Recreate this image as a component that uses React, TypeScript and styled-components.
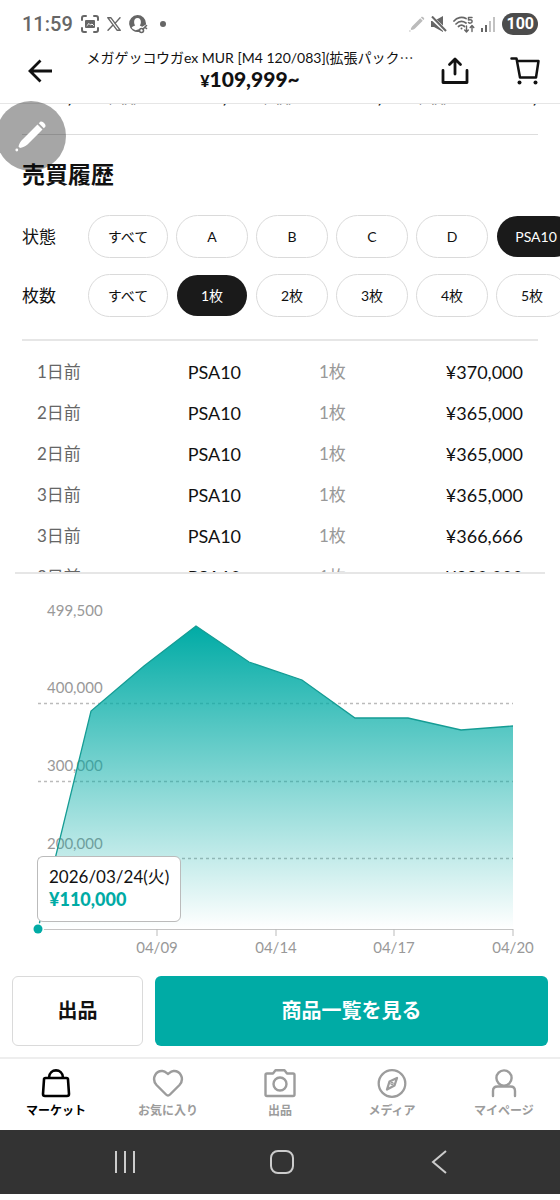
import React from "react";
import styled, { createGlobalStyle } from "styled-components";

const TEAL = "#00aba5";
const TEXT_FONT = `Lato, "Noto Sans CJK JP", sans-serif`;

const GlobalStyle = createGlobalStyle`
  *, *::before, *::after { box-sizing: border-box; }
  body { margin: 0; background: #fff; color: #111; font-family: ${TEXT_FONT}; }
  button { font-family: inherit; cursor: pointer; }
`;

const Screen = styled.div`
  position: relative;
  display: flex;
  flex-direction: column;
  width: 100%;
  min-height: 100vh;
  overflow: hidden;
`;

const StatusBar = styled.div`
  display: flex;
  align-items: center;
  justify-content: space-between;
  height: 48px;
  padding: 0 22px;
  color: #666;
`;

const StatusGroup = styled.div<{ $gap: number }>`
  display: flex;
  align-items: center;
  gap: ${(p) => p.$gap}px;
`;

const Clock = styled.time`
  font: 500 20px/24px Roboto, sans-serif;
`;

const Battery = styled.span`
  padding: 0 4px;
  border-radius: 11px;
  background: #4c4c4c;
  color: #fff;
  font: 700 16px/22px Roboto, sans-serif;
`;

const Header = styled.header`
  display: grid;
  grid-template-columns: 60px 1fr 140px;
  height: 56px;
  padding-left: 20px;
  border-bottom: 1px solid #e6e6e6;
`;

const IconButton = styled.button`
  display: flex;
  padding: 0;
  border: 0;
  background: none;
  color: #111;
`;

const HeaderSide = styled.div<{ $end?: boolean }>`
  display: flex;
  align-items: center;
  justify-content: ${(p) => (p.$end ? "flex-end" : "flex-start")};
  gap: 41px;
  padding: 0 ${(p) => (p.$end ? 20 : 8)}px 10px;
`;

const HeaderTitle = styled.div`
  text-align: center;
  white-space: nowrap;
`;

const ProductName = styled.h1`
  margin: 0;
  font-size: 14px;
  line-height: 18px;
  font-weight: 400;
`;

const Dots = styled.span`
  font-family: "Noto Sans CJK JP", sans-serif;
`;

const ProductPrice = styled.p`
  margin: 0;
  font-size: 21px;
  line-height: 24px;
  font-weight: 900;
`;

const Yen = styled.span`
  font-size: 16px;
`;

const PriceStrip = styled.div`
  display: flex;
  align-items: flex-end;
  height: 3px;
  padding-left: 26px;
  overflow: hidden;
`;

const StripItem = styled.div`
  flex: 0 0 155px;
  font-size: 18px;
  line-height: 18px;
  font-weight: 900;
  white-space: nowrap;
`;

const StripCount = styled.span`
  color: #777;
  font-size: 14px;
  font-weight: 400;
`;

const Section = styled.section`
  margin: 27px 22px 0;
  border-top: 1px solid #ddd;
`;

const SectionTitle = styled.h2`
  margin: 23px 0 24px;
  font-size: 23px;
  line-height: 33px;
  font-weight: 700;
`;

const FilterRow = styled.div`
  display: grid;
  grid-template-columns: 58px 1fr;
  align-items: center;
  gap: 8px;
  height: 43px;
  margin: 0 -22px 16px 0;
`;

const FilterLabel = styled.span`
  font-size: 17px;
  line-height: 24px;
`;

const Chips = styled.div`
  display: flex;
  gap: 8px;
  overflow: hidden;
`;

const Chip = styled.button<{ $wide?: boolean; $selected?: boolean }>`
  flex: 0 0 ${(p) => (p.$wide ? 80 : 72)}px;
  height: 43px;
  padding: 0;
  border: 1px solid ${(p) => (p.$selected ? "transparent" : "#dadada")};
  border-radius: 22px;
  background: ${(p) => (p.$selected ? "#1a1a1a" : "#fff")} padding-box;
  color: ${(p) => (p.$selected ? "#fff" : "#111")};
  font-size: 14px;
  line-height: 20px;
  font-weight: 400;
`;

const HistoryFrame = styled.div`
  height: 223px;
  margin: 0 15px;
  padding: 0 22px;
  overflow: hidden;
  border-bottom: 2px solid #e6e6e6;
`;

const Divider = styled.hr`
  height: 2px;
  margin: 22px 0 10px;
  border: 0;
  background: #e6e6e6;
`;

const HistoryTable = styled.table`
  width: 100%;
  border-collapse: collapse;
  table-layout: fixed;
  font-size: 18px;
`;

const Cell = styled.td<{ $width?: string; $tone?: string; $right?: boolean }>`
  width: ${(p) => p.$width ?? "auto"};
  height: 41px;
  padding: 0;
  color: ${(p) => p.$tone ?? "#111"};
  text-align: ${(p) => (p.$right ? "right" : "left")};
  line-height: 24px;
  white-space: nowrap;
`;

const CellSmall = styled.span`
  font-size: 17px;
`;

const ChartBox = styled.div`
  position: relative;
`;

const ChartSvg = styled.svg`
  display: block;
  width: 100%;
  height: auto;
  font-family: ${TEXT_FONT};
  font-size: 15px;
`;

const Tooltip = styled.div`
  position: absolute;
  left: 37px;
  bottom: 48px;
  padding: 9px 11px 11px;
  border: 1px solid #bbb;
  border-radius: 6px;
  background: #fff;
  font-size: 17px;
  line-height: 22px;
  white-space: nowrap;
`;

const TooltipPrice = styled.div`
  color: ${TEAL};
  font-size: 18px;
  font-weight: 900;
`;

const Actions = styled.div`
  display: grid;
  grid-template-columns: 1fr 3fr;
  gap: 12px;
  padding: 6px 12px 11px;
`;

const ActionButton = styled.button<{ $primary?: boolean }>`
  height: 70px;
  padding: 0 0 3px;
  border: ${(p) => (p.$primary ? "0" : "1px solid #dadada")};
  border-radius: 6px;
  background: ${(p) => (p.$primary ? TEAL : "#fff")};
  color: ${(p) => (p.$primary ? "#fff" : "#111")};
  font-size: 20px;
  font-weight: 700;
`;

const TabBar = styled.nav`
  display: grid;
  grid-template-columns: repeat(5, 1fr);
  height: 73px;
  border-top: 2px solid #eee;
`;

const Tab = styled.a<{ $active?: boolean }>`
  display: flex;
  flex-direction: column;
  align-items: center;
  gap: 3px;
  padding-top: 8px;
  color: ${(p) => (p.$active ? "#000" : "#9c9c9c")};
  font-size: 12px;
  line-height: 18px;
  font-weight: 700;
  text-decoration: none;
`;

const SystemBar = styled.div`
  display: grid;
  grid-template-columns: repeat(3, 1fr);
  align-items: center;
  justify-items: center;
  height: 64px;
  padding: 0 43px 0 47px;
  background: #333;
`;

const FloatingPen = styled.button`
  position: absolute;
  top: 101px;
  left: -4px;
  display: flex;
  align-items: center;
  justify-content: center;
  width: 70px;
  height: 70px;
  padding: 0;
  border: 0;
  border-radius: 50%;
  background: rgba(0, 0, 0, 0.35);
`;

const history = [
  ["1日前", "¥370,000"],
  ["2日前", "¥365,000"],
  ["2日前", "¥365,000"],
  ["3日前", "¥365,000"],
  ["3日前", "¥366,666"],
  ["3日前", "¥380,000"],
];

const stripPrices = ["¥110,000", "¥120,000", "¥130,000", "¥140,000"];
const conditions = ["すべて", "A", "B", "C", "D", "PSA10"];
const counts = ["すべて", "1枚", "2枚", "3枚", "4枚", "5枚"];

const series = [
  [38, 355], [91, 137], [144, 92], [196, 52], [249, 88],
  [302, 106], [355, 144], [408, 144], [461, 156], [513, 152],
];
const line = series.map(([x, y]) => `${x},${y}`).join(" ");
const yLabels = [
  { text: "499,500", y: 42 },
  { text: "400,000", y: 119, grid: 129 },
  { text: "300,000", y: 197, grid: 207 },
  { text: "200,000", y: 275, grid: 284 },
];
const xLabels = [
  { text: "04/09", x: 157 },
  { text: "04/14", x: 276 },
  { text: "04/17", x: 394 },
  { text: "04/20", x: 513 },
];

const stroke = (width: number) => ({
  fill: "none",
  stroke: "currentColor",
  strokeWidth: width,
  strokeLinecap: "round" as const,
  strokeLinejoin: "round" as const,
});

const CaptureIcon = () => (
  <svg width="18" height="18" viewBox="0 0 18 18" {...stroke(2)}>
    <path d="M1 5V3q0-2 2-2h2M13 1h2q2 0 2 2v2M17 13v2q0 2-2 2h-2M5 17H3q-2 0-2-2v-2" />
    <rect x="4" y="5" width="10" height="8" rx="1" fill="currentColor" stroke="none" />
    <path d="M6 10.500l2-2 1.500 1.500 1.500-1 1.500 1.500" stroke="#fff" strokeWidth="1" />
  </svg>
);

const XIcon = () => (
  <svg width="14" height="14" viewBox="0 0 14 14" {...stroke(1)}>
    <path d="M.7.700h3.100l9.500 12.600h-3.100zM13 .700L8 6.400M6 8L1 13.300" strokeWidth="1.400" />
  </svg>
);

const AccountIcon = () => (
  <svg width="19" height="19" viewBox="0 0 19 19">
    <path d="M8.500 0a8.500 8.500 0 1 0 2 16.800l-.6-2.600-3.400 1C4.500 14.500 3 13.500 2.700 12.500c1-1.200 2.500-1.500 3.500-2C4.500 8.500 4.500 3 8.500 3s4 5.500 2.300 7.500l2.400 1.300L17 9.500V8.500A8.500 8.500 0 0 0 8.500 0z" fill="currentColor" />
    <g {...stroke(1.6)}>
      <circle cx="12.500" cy="15.500" r="2" />
      <path d="M14 14l3.500-3.500M16 12l1.500 1.500" />
    </g>
  </svg>
);

const MuteIcon = () => (
  <svg width="16" height="16" viewBox="0 0 16 16">
    <path d="M0 5h3l9-5v16l-9-5H0z" fill="currentColor" />
    <path d="M0 1l15 14" stroke="#fff" strokeWidth="4" />
    <path d="M1 .500l14 14.500" stroke="currentColor" strokeWidth="2" />
  </svg>
);

const WifiIcon = () => (
  <svg width="22" height="17" viewBox="0 0 22 17" {...stroke(1.7)}>
    <path d="M1 5C4 1.500 9 .500 13 2.500M3 8c3-3 7-3 10-1M5.500 10.500c2-1.800 4-1.800 6 0" />
    <circle cx="8.500" cy="12.500" r="1" fill="currentColor" stroke="none" />
    <path d="M19 1.500h-3.500V4c3-.8 4 .5 3.500 2-.4 1.300-2.500 1.500-3.500.5" strokeWidth="1.500" />
    <path d="M13.500 10v5.500M11.700 14l1.800 2 1.800-2M19 15.500V10M17.200 11.500l1.800-2 1.800 2" strokeWidth="1.400" />
  </svg>
);

const SignalIcon = () => (
  <svg width="15" height="15" viewBox="0 0 15 15" fill="currentColor">
    <rect y="11" width="2" height="4" />
    <rect x="4" y="8" width="2" height="7" />
    <rect x="8" y="4" width="2" height="11" opacity="0.4" />
    <rect x="12" width="2" height="15" opacity="0.4" />
  </svg>
);

const PencilIcon = ({ size, color }: { size: number; color: string }) => (
  <svg width={size} height={size} viewBox="0 0 32 32" fill={color}>
    <path d="M22.500 4.500l5 5L12.500 24.500c-2 2-5 3-7.500 3.500l-1.500-1.500C4 24 5.500 21.500 7.500 19.500zM23.800 3.200l1.500-1.500c1.800-1.500 6.500 3 5 5l-1.500 1.500z" />
    <circle cx="1.800" cy="30" r="1.400" />
  </svg>
);

const BackIcon = () => (
  <svg width="24" height="24" viewBox="0 0 24 24" fill="none" stroke="currentColor" strokeWidth="2.800">
    <path d="M12.500 1.500L2 12l10.500 10.500M2 12h22" />
  </svg>
);

const ShareIcon = () => (
  <svg width="28" height="28" viewBox="0 0 28 28" {...stroke(2.800)}>
    <path d="M2 13.500V25.500h24V13.500M14 17V2.500M8.500 7.500L14 2l5.500 5.500" />
  </svg>
);

const CartIcon = () => (
  <svg width="30" height="29" viewBox="0 0 30 29" {...stroke(2.500)}>
    <path d="M1.500 2.500h5L10 21.500h16L28.500 5H7" />
    <circle cx="9.500" cy="26.500" r="2" fill="currentColor" stroke="none" />
    <circle cx="25.500" cy="26.500" r="2" fill="currentColor" stroke="none" />
  </svg>
);

const MarketIcon = () => (
  <svg width="32" height="32" viewBox="0 0 32 32" {...stroke(2.600)}>
    <path d="M5.500 11h21q1.500 0 1.500 1.500l1 14.500q0 2-2 2H5q-2 0-2-2l1-14.500Q4 11 5.500 11zM9 10.500C9.500 1 22.500 1 23 10.500" />
  </svg>
);

const HeartIcon = () => (
  <svg width="32" height="32" viewBox="0 0 32 32" {...stroke(2.400)}>
    <path d="M16 28.500q-1 0-2-1L4.500 18C-1 11.500 4 3.500 10.500 4c3 .2 4 2 5.500 3 1.500-1 2.500-2.800 5.500-3C28 3.500 33 11.500 27.500 18L18 27.500q-1 1-2 1z" />
  </svg>
);

const CameraIcon = () => (
  <svg width="32" height="32" viewBox="0 0 32 32" {...stroke(2.400)}>
    <path d="M3 6.500h6l2.500-3.300h9L23 6.500h6q1.500 0 1.500 1.500v19.500Q30.500 29 29 29H3q-1.500 0-1.500-1.500V8Q1.500 6.500 3 6.500z" />
    <circle cx="16" cy="17" r="6.500" />
  </svg>
);

const CompassIcon = () => (
  <svg width="32" height="32" viewBox="0 0 32 32" {...stroke(2.300)}>
    <circle cx="16" cy="16.500" r="13.300" />
    <path d="M21 11l-2.500 7.500-7.500 4 2.500-8z" />
    <circle cx="16" cy="16.500" r="0.600" />
  </svg>
);

const PersonIcon = () => (
  <svg width="32" height="32" viewBox="0 0 32 32" {...stroke(2.400)}>
    <circle cx="16" cy="11" r="7.600" />
    <path d="M5 29v-5q0-4.500 4.500-4.500h13q4.500 0 4.500 4.500v5" />
  </svg>
);

const tabs = [
  { label: "マーケット", Icon: MarketIcon },
  { label: "お気に入り", Icon: HeartIcon },
  { label: "出品", Icon: CameraIcon },
  { label: "メディア", Icon: CompassIcon },
  { label: "マイページ", Icon: PersonIcon },
];

function Filter({ label, options, selected }: { label: string; options: string[]; selected: string }) {
  return (
    <FilterRow role="group" aria-label={label}>
      <FilterLabel>{label}</FilterLabel>
      <Chips>
        {options.map((o) => (
          <Chip key={o} type="button" $wide={o.length > 2} $selected={o === selected} aria-pressed={o === selected}>
            {o}
          </Chip>
        ))}
      </Chips>
    </FilterRow>
  );
}

function PriceChart() {
  return (
    <ChartBox>
      <ChartSvg viewBox="0 0 560 396" role="img" aria-label="価格推移">
        <defs>
          <linearGradient id="area" x1="0" y1="0" x2="0" y2="1">
            <stop offset="0" stopColor={TEAL} />
            <stop offset="1" stopColor={TEAL} stopOpacity="0" />
          </linearGradient>
        </defs>
        {yLabels.map((l) => (
          <g key={l.text}>
            <text x="47" y={l.y} fill="#999">{l.text}</text>
            {l.grid && <path d={`M38 ${l.grid}.5H513`} stroke="#bbb" strokeWidth="1.300" strokeDasharray="3 3" />}
          </g>
        ))}
        <path d="M38 355.500H513" stroke="#c4c4c4" />
        <polygon points={`${line} 513,355`} fill="url(#area)" />
        <polyline points={line} fill="none" stroke="#159c94" strokeWidth="1.300" />
        {xLabels.map((l) => (
          <g key={l.text}>
            <path d={`M${l.x} 355v7`} stroke="#bbb" />
            <text x={l.x} y="379" textAnchor="middle" fill="#999">{l.text}</text>
          </g>
        ))}
        <circle cx="38" cy="355" r="6" fill="#fff" />
        <circle cx="38" cy="355" r="4.500" fill={TEAL} />
      </ChartSvg>
      <Tooltip>
        <div>2026/03/24(火)</div>
        <TooltipPrice>¥110,000</TooltipPrice>
      </Tooltip>
    </ChartBox>
  );
}

export default function App() {
  return (
    <Screen>
      <GlobalStyle />
      <StatusBar>
        <StatusGroup $gap={8}>
          <Clock>11:59</Clock>
          <CaptureIcon />
          <XIcon />
          <AccountIcon />
          <svg width="14" height="6" viewBox="0 0 14 6" fill="currentColor">
            <circle cx="7" cy="3" r="3" />
          </svg>
        </StatusGroup>
        <StatusGroup $gap={6}>
          <PencilIcon size={16} color="#bbb" />
          <MuteIcon />
          <WifiIcon />
          <SignalIcon />
          <Battery>100</Battery>
        </StatusGroup>
      </StatusBar>

      <Header>
        <HeaderSide>
          <IconButton type="button" aria-label="戻る"><BackIcon /></IconButton>
        </HeaderSide>
        <HeaderTitle>
          <ProductName>メガゲッコウガex MUR [M4 120/083](拡張パック<Dots>…</Dots></ProductName>
          <ProductPrice><Yen>¥</Yen>109,999~</ProductPrice>
        </HeaderTitle>
        <HeaderSide $end>
          <IconButton type="button" aria-label="共有"><ShareIcon /></IconButton>
          <IconButton type="button" aria-label="カート"><CartIcon /></IconButton>
        </HeaderSide>
      </Header>

      <PriceStrip>
        {stripPrices.map((p) => (
          <StripItem key={p}>{p} <StripCount>(1枚)</StripCount></StripItem>
        ))}
      </PriceStrip>

      <Section>
        <SectionTitle>売買履歴</SectionTitle>
        <Filter label="状態" options={conditions} selected="PSA10" />
        <Filter label="枚数" options={counts} selected="1枚" />
        <Divider />
      </Section>

      <HistoryFrame>
        <HistoryTable>
          <tbody>
            {history.map(([when, price], i) => (
              <tr key={i}>
                <Cell $width="31%" $tone="#666"><CellSmall>{when}</CellSmall></Cell>
                <Cell $width="27%">PSA10</Cell>
                <Cell $tone="#999"><CellSmall>1枚</CellSmall></Cell>
                <Cell $right>{price}</Cell>
              </tr>
            ))}
          </tbody>
        </HistoryTable>
      </HistoryFrame>

      <PriceChart />

      <Actions>
        <ActionButton type="button">出品</ActionButton>
        <ActionButton type="button" $primary>商品一覧を見る</ActionButton>
      </Actions>

      <TabBar>
        {tabs.map(({ label, Icon }, i) => (
          <Tab key={label} href="#" $active={i === 0}>
            <Icon />
            {label}
          </Tab>
        ))}
      </TabBar>

      <SystemBar>
        <IconButton type="button" aria-label="履歴">
          <svg width="24" height="24" viewBox="0 0 24 24" stroke="#ccc" strokeWidth="2"><path d="M3 1v22M12 1v22M21 1v22" /></svg>
        </IconButton>
        <IconButton type="button" aria-label="ホーム">
          <svg width="24" height="24" viewBox="0 0 24 24" fill="none" stroke="#ccc" strokeWidth="2"><rect x="1" y="1" width="22" height="22" rx="7" /></svg>
        </IconButton>
        <IconButton type="button" aria-label="前へ">
          <svg width="24" height="24" viewBox="0 0 24 24" fill="none" stroke="#ccc" strokeWidth="2"><path d="M19 1L6 12l13 11" /></svg>
        </IconButton>
      </SystemBar>

      <FloatingPen type="button" aria-label="編集">
        <PencilIcon size={32} color="#fff" />
      </FloatingPen>
    </Screen>
  );
}
